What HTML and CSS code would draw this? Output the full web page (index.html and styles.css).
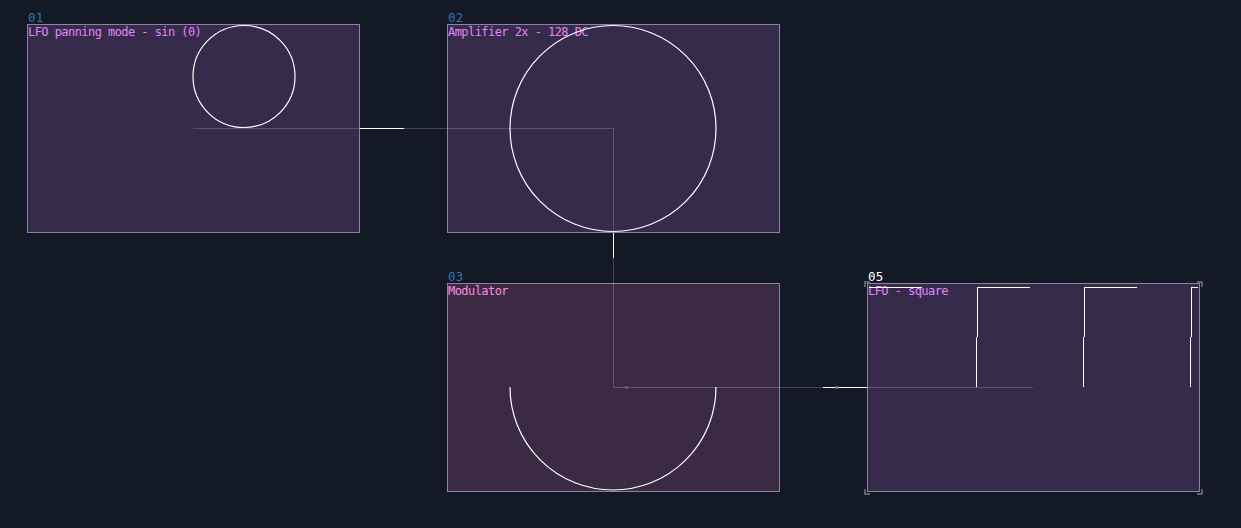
FILE: index.html
```html
<!DOCTYPE html>
<html>
<head>
<meta charset="utf-8">
<link rel="stylesheet" href="styles.css">
</head>
<body>
<div class="canvas">
  <div class="node n01">
    <div class="label">01</div>
    <div class="box"><div class="title">LFO panning mode - sin (0)</div></div>
  </div>
  <div class="node n02">
    <div class="label">02</div>
    <div class="box"><div class="title">Amplifier 2x - 128 DC</div></div>
  </div>
  <div class="node n03">
    <div class="label">03</div>
    <div class="box mod"><div class="title">Modulator</div></div>
  </div>
  <div class="node n05">
    <div class="label sel">05</div>
    <div class="box"><div class="title">LFO - square</div></div>
    <span class="corner tl"></span><span class="corner tr"></span>
    <span class="corner bl"></span><span class="corner br"></span>
  </div>
  <svg class="wires" width="1241" height="528" viewBox="0 0 1241 528">
    <g fill="none" stroke-width="1" shape-rendering="crispEdges">
      <path class="dim" d="M193 128.5H613.5V387.5H1033"/>
      <path class="hot" d="M360 128.5H404M613.5 233V258M823 387.5H867"/>
      <rect class="dot" x="625" y="386" width="3" height="3"/>
      <rect class="dot2" x="835" y="386" width="3" height="3"/>
      <path class="hot" d="M869 287.5H922M977.5 287V337M976.5 337V387M977 287.5H1030M1084.5 287V337M1083.5 337V387M1084 287.5H1137M1191.5 287V337M1190.5 337V387M1191 287.5H1198"/>
    </g>
    <g fill="none" stroke="#fff" stroke-width="1.2">
      <circle cx="244" cy="76.5" r="51"/>
      <circle cx="613" cy="128.5" r="103"/>
      <path d="M510 387A103 103 0 0 0 716 387"/>
    </g>
  </svg>
</div>
</body>
</html>
```
FILE: styles.css
```css
html, body {
  margin: 0;
  padding: 0;
  background: #131925;
}
.canvas {
  position: relative;
  width: 1241px;
  height: 528px;
  overflow: hidden;
  background: #131925;
  font-family: "DejaVu Sans Mono", "Liberation Mono", monospace;
  font-size: 12px;
  letter-spacing: -0.56px;
}
.node {
  position: absolute;
  width: 333px;
}
.n01 { left: 27px; top: 11px; }
.n02 { left: 447px; top: 11px; }
.n03 { left: 447px; top: 270px; }
.n05 { left: 867px; top: 270px; }
.label {
  height: 13px;
  line-height: 14px;
  padding-left: 1px;
  font-size: 12.5px;
  letter-spacing: 0.3px;
  color: #3275b0;
}
.label.sel { color: #ffffff; }
.box {
  box-sizing: border-box;
  width: 333px;
  height: 209px;
  border: 1px solid #8a83a2;
  background: #372b4b;
}
.box.mod { background: #3c2a45; }
.title {
  line-height: 14px;
  padding-left: 0px;
  color: #e285fa;
}
.mod .title { color: #fb8fdf; }
.corner {
  position: absolute;
  width: 4px;
  height: 4px;
  border-color: #5e5f73;
  border-style: solid;
  border-width: 0;
}
.corner.tl { left: -3px; top: 11px; border-left-width: 2px; border-top-width: 2px; }
.corner.tr { right: -3px; top: 11px; border-right-width: 2px; border-top-width: 2px; }
.corner.bl { left: -3px; bottom: -3px; border-left-width: 2px; border-bottom-width: 2px; }
.corner.br { right: -3px; bottom: -3px; border-right-width: 2px; border-bottom-width: 2px; }
.wires {
  position: absolute;
  left: 0;
  top: 0;
  pointer-events: none;
}
.dim { stroke: rgba(170, 160, 200, 0.33); }
.hot { stroke: #ffffff; }
.dot { fill: rgba(170, 160, 200, 0.3); }
.dot2 { fill: #6c6a80; }
```
